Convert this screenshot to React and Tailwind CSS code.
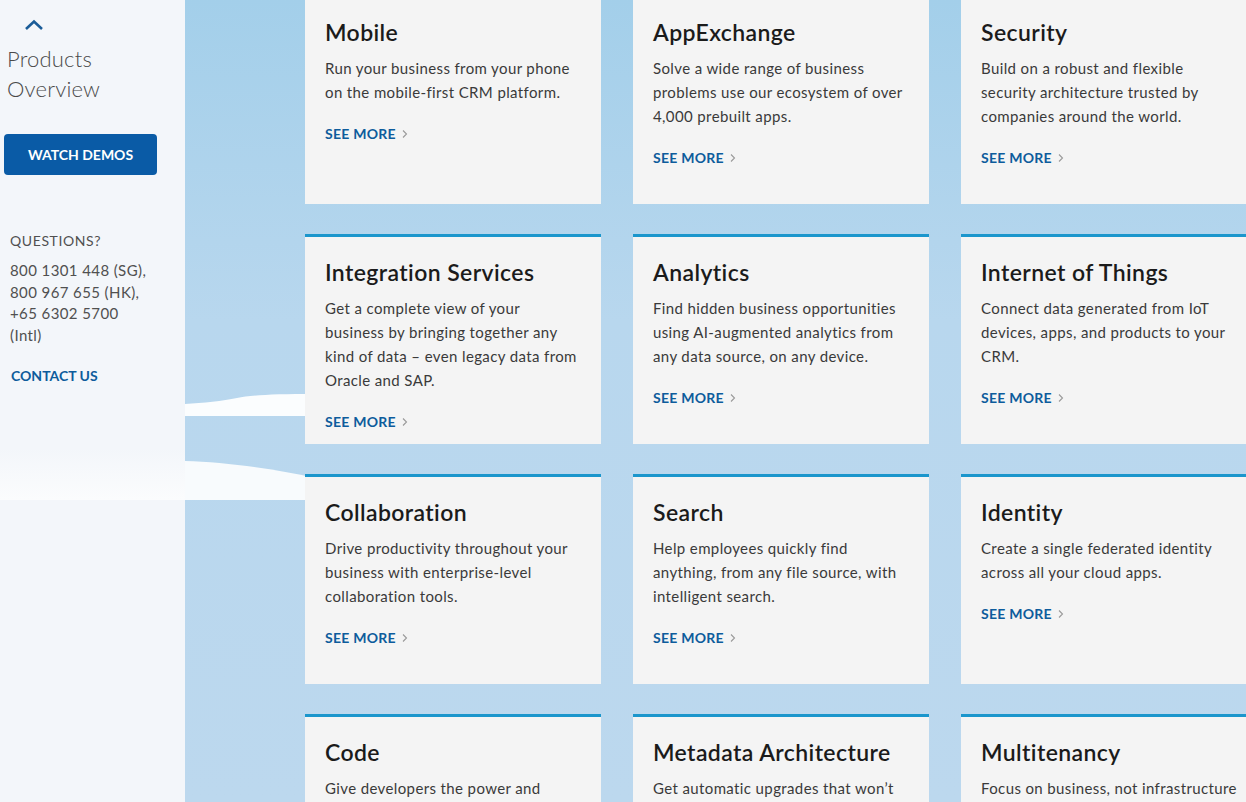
import React from "react";

const cards = [
  { title: "Mobile", text: "Run your business from your phone on the mobile-first CRM platform." },
  { title: "AppExchange", text: "Solve a wide range of business problems use our ecosystem of over 4,000 prebuilt apps." },
  { title: "Security", text: "Build on a robust and flexible security architecture trusted by companies around the world." },
  { title: "Integration Services", text: "Get a complete view of your business by bringing together any kind of data – even legacy data from Oracle and SAP." },
  { title: "Analytics", text: "Find hidden business opportunities using AI-augmented analytics from any data source, on any device." },
  { title: "Internet of Things", text: "Connect data generated from IoT devices, apps, and products to your CRM." },
  { title: "Collaboration", text: "Drive productivity throughout your business with enterprise-level collaboration tools." },
  { title: "Search", text: "Help employees quickly find anything, from any file source, with intelligent search." },
  { title: "Identity", text: "Create a single federated identity across all your cloud apps." },
  { title: "Code", text: "Give developers the power and flexibility to build apps faster." },
  { title: "Metadata Architecture", text: "Get automatic upgrades that won’t break your customisations." },
  { title: "Multitenancy", text: "Focus on business, not infrastructure management." },
];

function Chevron() {
  return (
    <svg width="6" height="10" viewBox="0 0 6 10" className="ml-[6px]">
      <path d="M1 1.5 L4.5 5 L1 8.5" fill="none" stroke="#9a9a9a" strokeWidth="1.1" />
    </svg>
  );
}

function Card({ title, text }) {
  return (
    <div className="h-[210px] bg-[#f4f4f4] border-t-[3px] border-[#1b96cc] px-5 pt-5">
      <h3 className="text-[23px] leading-[30px] tracking-[0.4px] font-semibold text-[#1b1b1b]">{title}</h3>
      <p className="mt-[9px] text-[15px] leading-[24px] tracking-[0.38px] text-[#3a3a3a]">{text}</p>
      <a href="#" className="mt-5 flex items-center text-[14px] leading-5 tracking-[0.25px] font-bold text-[#0d5c9c]">
        SEE MORE
        <Chevron />
      </a>
    </div>
  );
}

export default function App() {
  return (
    <div className="w-[1246px] h-[802px] overflow-hidden flex font-['Lato',sans-serif]">
      <aside className="relative w-[185px] shrink-0 bg-[#f3f6fa]">
        <div className="absolute left-0 right-0 top-[448px] h-[52px] bg-gradient-to-b from-[#f3f6fa] to-[#fbfcfd]" />
        <div className="relative">
          <svg width="20" height="12" viewBox="0 0 20 12" className="ml-[24px] mt-[19px]">
            <path d="M2 10 L10 2.5 L18 10" fill="none" stroke="#1a5c98" strokeWidth="2.6" />
          </svg>
          <h2 className="mt-[13px] pl-[7px] text-[22px] leading-[30px] tracking-[0.2px] font-light text-[#4a4a4a]">
            Products
            <br />
            Overview
          </h2>
          <button className="mt-[30px] ml-[4px] w-[153px] h-[41px] rounded-[4px] bg-[#0a5ba6] text-white text-[14px] font-bold">
            WATCH DEMOS
          </button>
          <p className="mt-[56px] pl-[10px] text-[14px] leading-5 tracking-[0.6px] text-[#505050]">QUESTIONS?</p>
          <p className="mt-[9px] pl-[10px] text-[15px] leading-[21.7px] tracking-[0.4px] text-[#505050]">
            800 1301 448 (SG),
            <br />
            800 967 655 (HK),
            <br />
            +65 6302 5700
            <br />
            (Intl)
          </p>
          <a href="#" className="block mt-[19px] pl-[11px] text-[14px] leading-5 font-bold text-[#0d5c9c]">
            CONTACT US
          </a>
        </div>
      </aside>
      <main className="relative flex-1 bg-gradient-to-b from-[#a3cfea] via-[#b8d7ee] via-40% to-[#bcd8ee]">
        <svg width="130" height="520" viewBox="0 0 130 520" className="absolute left-0 top-0">
          <path d="M0 404 C18 403 38 401 52 398 C66 395 88 394 130 394 L130 416 L0 416 Z" fill="#fbfdfe" />
          <path d="M0 461 C40 462 90 469 130 478 L130 500 L0 500 Z" fill="#f8fbfd" />
        </svg>
        <div className="relative mt-[-6px] pl-[120px] grid grid-cols-[296px_296px_296px] gap-x-8 gap-y-[30px]">
          {cards.map((c) => (
            <Card key={c.title} title={c.title} text={c.text} />
          ))}
        </div>
      </main>
    </div>
  );
}
